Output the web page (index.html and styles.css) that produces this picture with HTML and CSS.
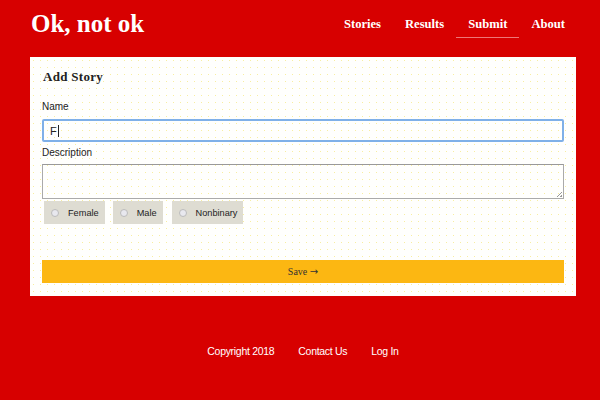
FILE: index.html
```html
<!DOCTYPE html>
<html>
<head>
<meta charset="utf-8">
<link rel="stylesheet" href="styles.css">
</head>
<body>
<div class="page">
  <header class="header">
    <div class="logo">Ok, not ok</div>
    <nav class="nav">
      <a class="nav-link">Stories</a>
      <a class="nav-link">Results</a>
      <a class="nav-link active">Submit</a>
      <a class="nav-link">About</a>
    </nav>
  </header>
  <main class="card">
    <h2 class="card-title">Add Story</h2>
    <label class="label">Name</label>
    <div class="input focused">F<span class="caret"></span></div>
    <label class="label">Description</label>
    <div class="textarea"><span class="grip"></span></div>
    <div class="radios">
      <span class="radio"><span class="dot"></span>Female</span>
      <span class="radio"><span class="dot"></span>Male</span>
      <span class="radio"><span class="dot"></span>Nonbinary</span>
    </div>
    <button class="save">Save <span class="arrow">→</span></button>
  </main>
  <footer class="footer">
    <a>Copyright 2018</a>
    <a>Contact Us</a>
    <a>Log In</a>
  </footer>
</div>
</body>
</html>
```
FILE: styles.css
```css
html, body { margin: 0; padding: 0; }
body {
  background: #d70000;
  width: 600px;
  height: 400px;
  overflow: hidden;
  font-family: "Liberation Sans", Arial, sans-serif;
}
.page { width: 546px; margin-left: 30px; }
.header {
  height: 57px;
  display: flex;
  align-items: flex-start;
  justify-content: space-between;
}
.logo {
  font-family: "Liberation Serif", serif;
  font-weight: bold;
  color: #fff;
  font-size: 25px;
  margin-top: 10px;
  margin-left: 1px;
}
.nav { display: flex; margin-top: 16px; margin-right: 11px; }
.nav-link {
  font-family: "Liberation Serif", serif;
  font-weight: bold;
  color: #fff;
  font-size: 12.6px;
  padding: 0 12px 4px;
  line-height: 17px;
}
.nav-link:last-child { padding-right: 0; }
.nav-link.active { border-bottom: 1px solid #e77; }
.card {
  display: block;
  background-color: #fffffd;
  background-image: radial-gradient(#f8eea0 0.8px, transparent 1px);
  background-size: 7px 7px;
  padding: 10px 12px 13px;
  height: 216px;
}
.card-title {
  font-family: "Liberation Serif", serif;
  font-weight: bold;
  font-size: 13px;
  letter-spacing: 0.3px;
  color: #222;
  margin: 1px 0 15px 1px;
  line-height: 18px;
}
.label { display: block; font-size: 10px; color: #222; line-height: 12px; margin-bottom: 6px; }
.input {
  box-sizing: border-box;
  height: 23px;
  border: 2px solid #7fb0e8;
  border-radius: 2px;
  font-size: 11px;
  padding: 3px 6px;
  color: #222;
  margin-bottom: 5px;
  display: flex;
  align-items: center;
}
.caret { display: inline-block; width: 1px; height: 12px; background: #222; margin-left: 1px; }
.textarea {
  box-sizing: border-box;
  height: 35px;
  border: 1px solid #aaa;
  border-top-color: #999;
  position: relative;
  margin-top: -1px;
}
.grip {
  position: absolute; right: 1px; bottom: 1px; width: 5px; height: 5px;
  background: linear-gradient(135deg, transparent 45%, #999 45%, #999 55%, transparent 55%, transparent 75%, #999 75%);
}
.radios { display: flex; gap: 8px; margin: 2px 0 36px 2px; }
.radio {
  display: flex; align-items: center;
  height: 23px;
  background: #dedcd2;
  font-size: 9.2px;
  color: #222;
  padding: 0 6px 0 7px;
}
.radio:last-child { margin-left: 1px; }
.dot {
  box-sizing: border-box;
  width: 8px; height: 8px; border-radius: 50%;
  border: 1px solid #bbb; background: #e8e8ee;
  margin-right: 9px;
}
.save {
  display: block; width: 100%; height: 23px;
  border: 0;
  background: #fcb712;
  font-family: "Liberation Serif", serif;
  font-size: 10px;
  color: #333;
  padding: 0;
}
.arrow { font-family: "DejaVu Sans", sans-serif; font-size: 10px; }
.footer {
  display: flex; justify-content: center; gap: 24px;
  margin-top: 49px;
  font-size: 10.5px;
  color: #fff;
  letter-spacing: -0.3px;
}
```
